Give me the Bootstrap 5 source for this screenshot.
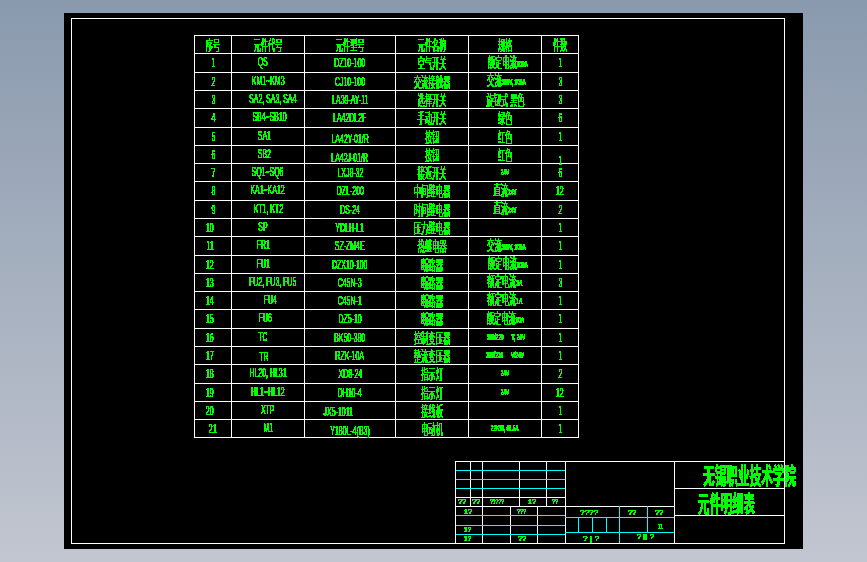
<!DOCTYPE html>
<html lang="zh">
<head>
<meta charset="utf-8">
<title>元件明细表</title>
<link href="https://cdn.jsdelivr.net/npm/bootstrap@5.3.0/dist/css/bootstrap.min.css" rel="stylesheet">
<style>
html,body{height:100%}
body{margin:0;overflow:hidden;background:linear-gradient(180deg,#8a9aae 0%,#c2c6d0 100%);}
.cad-sheet{background:#000;width:739px;height:536px;margin:13px 0 0 64px;padding:5px 7px 0}
.cad-frame{border:1px solid #fff;width:714px;height:526px}
.filter-defs{position:absolute;width:0;height:0}
.parts{width:385px;table-layout:fixed;border-collapse:collapse;margin:16px 0 0 122px;--bs-table-bg:transparent;--bs-table-color:#0f0;--bs-table-border-color:#fff;color:#0f0}
.parts>:not(caption)>*>*{padding:0;border:1px solid #fff;font-size:0;line-height:0;text-align:center;vertical-align:middle;overflow:visible;white-space:nowrap;background:transparent;color:#0f0;box-shadow:none}
.parts tr{height:18px}
.parts tr.tall{height:19px}
.c1{width:37px}.c2{width:73px}.c3{width:91px}.c4{width:73px}.c5{width:73px}.c6{width:37px}
.tx{display:inline-block;vertical-align:middle;font-family:"Noto Sans CJK SC","Liberation Sans",sans-serif;font-size:14px;font-weight:400;line-height:14px;transform:translate(var(--dx,0),var(--dy,-1px)) scaleX(var(--sx,.52));filter:url(#crisp)}
.la{font-family:"Liberation Sans",sans-serif;font-size:12px;font-weight:400;--sx:.58;--dy:0px}
.mi{font-family:"Liberation Sans",sans-serif;font-size:9px;font-weight:700}
.parts td:nth-child(2) .tx{--dy:-1px}
.u1{--dy:-1px!important}.u2{--dy:-2px!important}
.d1{--dy:1px!important}.d2{--dy:2px!important}.d3{--dy:3px!important}.d6{--dy:6px!important}
.l3{--dx:-3px}.l4{--dx:-4px}.l5{--dx:-5px}.l12{--dx:-12px}.r2{--dx:2px}
.title-block{display:block;align-self:flex-end;overflow:visible;margin-right:-14px}
.w{stroke:#fff;stroke-width:1}
.cy{stroke:#0ff;stroke-width:1}
.title-block text{fill:#0f0;font-family:"Liberation Sans",sans-serif;font-size:7px}
.title-block .big{font-family:"Noto Sans CJK SC",sans-serif;font-size:23px;font-weight:700}
.crisp-g{filter:url(#crisp)}
</style>
</head>
<body>
<svg class="filter-defs" aria-hidden="true"><filter id="crisp" x="-20%" y="-30%" width="140%" height="160%" color-interpolation-filters="sRGB"><feComponentTransfer><feFuncA type="discrete" tableValues="0 1 1 1 1 1 1 1"/></feComponentTransfer></filter></svg>
<div class="cad-sheet">
<div class="cad-frame d-flex flex-column">
<table class="table parts mb-0">
<colgroup><col class="c1"><col class="c2"><col class="c3"><col class="c4"><col class="c5"><col class="c6"></colgroup>
<tbody>
<tr><td><span class="tx">序号</span></td><td><span class="tx">元件代号</span></td><td><span class="tx">元件型号</span></td><td><span class="tx">元件名称</span></td><td><span class="tx">规格</span></td><td><span class="tx">件数</span></td></tr>
<tr class="tall"><td><span class="tx la">1</span></td><td><span class="tx la l5">QS</span></td><td><span class="tx la">DZ10-100</span></td><td><span class="tx">空气开关</span></td><td><span class="tx">额定电流<span class="mi">100A</span></span></td><td><span class="tx la">1</span></td></tr>
<tr><td><span class="tx la">2</span></td><td><span class="tx la">KM1~KM3</span></td><td><span class="tx la">CJ10-100</span></td><td><span class="tx">交流接触器</span></td><td><span class="tx">交流<span class="mi">380V, 100A</span></span></td><td><span class="tx la">3</span></td></tr>
<tr><td><span class="tx la">3</span></td><td><span class="tx la">SA2, SA3, SA4</span></td><td><span class="tx la">LA39-AY-11</span></td><td><span class="tx">选择开关</span></td><td><span class="tx">旋钮式 黑色</span></td><td><span class="tx la">3</span></td></tr>
<tr class="tall"><td><span class="tx la">4</span></td><td><span class="tx la r2">SB4~SB10</span></td><td><span class="tx la">LA42DL2F</span></td><td><span class="tx">手动开关</span></td><td><span class="tx">绿色</span></td><td><span class="tx la">6</span></td></tr>
<tr><td><span class="tx la">5</span></td><td><span class="tx la l4">SA1</span></td><td><span class="tx la d2">LA42Y-01/R</span></td><td><span class="tx">按钮</span></td><td><span class="tx">红色</span></td><td><span class="tx la">1</span></td></tr>
<tr><td><span class="tx la">6</span></td><td><span class="tx la l4">SB2</span></td><td><span class="tx la d3">LA42J-01/R</span></td><td><span class="tx">按钮</span></td><td><span class="tx">红色</span></td><td><span class="tx la d6">1</span></td></tr>
<tr><td><span class="tx la">7</span></td><td><span class="tx la">SQ1~SQ6</span></td><td><span class="tx la">LXJ8-32</span></td><td><span class="tx">接近开关</span></td><td><span class="tx mi">24V</span></td><td><span class="tx la">6</span></td></tr>
<tr class="tall"><td><span class="tx la">8</span></td><td><span class="tx la">KA1~KA12</span></td><td><span class="tx la">DZL-200</span></td><td><span class="tx">中间继电器</span></td><td><span class="tx">直流<span class="mi">24V</span></span></td><td><span class="tx la">12</span></td></tr>
<tr><td><span class="tx la">9</span></td><td><span class="tx la">KT1, KT2</span></td><td><span class="tx la">DS-24</span></td><td><span class="tx">时间继电器</span></td><td><span class="tx">直流<span class="mi">24V</span></span></td><td><span class="tx la">2</span></td></tr>
<tr><td><span class="tx la l3">10</span></td><td><span class="tx la l5">SP</span></td><td><span class="tx la">YDLH-L1</span></td><td><span class="tx">压力继电器</span></td><td></td><td><span class="tx la">1</span></td></tr>
<tr class="tall"><td><span class="tx la l3">11</span></td><td><span class="tx la l5">FR1</span></td><td><span class="tx la">SZ-ZM4E</span></td><td><span class="tx">热继电器</span></td><td><span class="tx">交流<span class="mi">380V, 100A</span></span></td><td><span class="tx la">1</span></td></tr>
<tr><td><span class="tx la l3">12</span></td><td><span class="tx la l5">FU1</span></td><td><span class="tx la">DZX10-100</span></td><td><span class="tx">断路器</span></td><td><span class="tx">额定电流<span class="mi">100A</span></span></td><td><span class="tx la">1</span></td></tr>
<tr><td><span class="tx la l3">13</span></td><td><span class="tx la">FU2, FU3, FU5</span></td><td><span class="tx la">C45N-3</span></td><td><span class="tx">断路器</span></td><td><span class="tx">额定电流<span class="mi">3A</span></span></td><td><span class="tx la">3</span></td></tr>
<tr><td><span class="tx la l3">14</span></td><td><span class="tx la r2">FU4</span></td><td><span class="tx la">C45N-1</span></td><td><span class="tx">断路器</span></td><td><span class="tx">额定电流<span class="mi">1A</span></span></td><td><span class="tx la">1</span></td></tr>
<tr class="tall"><td><span class="tx la l3">15</span></td><td><span class="tx la l3">FU6</span></td><td><span class="tx la">DZ5-10</span></td><td><span class="tx">断路器</span></td><td><span class="tx">额定电流<span class="mi">10A</span></span></td><td><span class="tx la">1</span></td></tr>
<tr><td><span class="tx la l3">16</span></td><td><span class="tx la l5">TC</span></td><td><span class="tx la">BK50-380</span></td><td><span class="tx">控制变压器</span></td><td><span class="tx mi">380/220&nbsp;&nbsp;&nbsp;&nbsp;&nbsp;&nbsp;V, 24V</span></td><td><span class="tx la">1</span></td></tr>
<tr><td><span class="tx la l3">17</span></td><td><span class="tx la l4 d1">TR</span></td><td><span class="tx la">RZK-10A</span></td><td><span class="tx">整流变压器</span></td><td><span class="tx mi">380/220&nbsp;&nbsp;&nbsp;&nbsp;&nbsp;&nbsp;V/24V</span></td><td><span class="tx la">1</span></td></tr>
<tr class="tall"><td><span class="tx la l3">18</span></td><td><span class="tx la">HL20, HL31</span></td><td><span class="tx la">XD8-24</span></td><td><span class="tx">指示灯</span></td><td><span class="tx mi">24V</span></td><td><span class="tx la">2</span></td></tr>
<tr><td><span class="tx la l3">19</span></td><td><span class="tx la">HL1~HL12</span></td><td><span class="tx la">DH10-4</span></td><td><span class="tx">指示灯</span></td><td><span class="tx mi">24V</span></td><td><span class="tx la">12</span></td></tr>
<tr><td><span class="tx la l3">20</span></td><td><span class="tx la">XTP</span></td><td><span class="tx la l12 d1">JX5-1011</span></td><td><span class="tx">接线板</span></td><td></td><td><span class="tx la">1</span></td></tr>
<tr><td><span class="tx la">21</span></td><td><span class="tx la">M1</span></td><td><span class="tx la d2">Y180L-4(B3)</span></td><td><span class="tx">电动机</span></td><td><span class="tx mi">22KW, 41.5A</span></td><td><span class="tx la">1</span></td></tr>
</tbody>
</table>
<svg class="title-block mt-auto" width="343" height="82" viewBox="455 461 343 82">
<g class="w">
<path d="M456 461.5H784M455.5 461V543M470.5 461V506M482.5 461V543M519.5 461V506M546.5 461V506M565.5 461V543M456 497.5H565M456 506.5H674M510.5 506V543M537.5 506V543M674.5 461V543M674 488.5H784M674 515.5H784"/>
</g>
<g class="cy">
<path d="M456 470.5H565M456 479.5H565M456 488.5H565M456 515.5H565M456 525.5H565M456 534.5H565M565 517.5H674M565 532.5H674M578.5 517V532M592.5 517V532M606.5 517V532M619.5 506V543M647.5 506V532"/>
</g>
<g class="crisp-g">
<text x="458" y="504" textLength="8" lengthAdjust="spacingAndGlyphs">??</text>
<text x="472" y="504" textLength="8" lengthAdjust="spacingAndGlyphs">??</text>
<text x="490" y="504" textLength="14" lengthAdjust="spacingAndGlyphs">?????</text>
<text x="528" y="504" textLength="8" lengthAdjust="spacingAndGlyphs">1?</text>
<text x="552" y="504" textLength="6" lengthAdjust="spacingAndGlyphs">??</text>
<text x="464" y="514" textLength="8" lengthAdjust="spacingAndGlyphs">1?</text>
<text x="517" y="514" textLength="9" lengthAdjust="spacingAndGlyphs">???</text>
<text x="464" y="532" textLength="7" lengthAdjust="spacingAndGlyphs">1?</text>
<text x="464" y="541" textLength="7" lengthAdjust="spacingAndGlyphs">1?</text>
<text x="518" y="541" textLength="8" lengthAdjust="spacingAndGlyphs">??</text>
<text x="580" y="515" textLength="18" lengthAdjust="spacingAndGlyphs">????</text>
<text x="628" y="515" textLength="8" lengthAdjust="spacingAndGlyphs">??</text>
<text x="655" y="515" textLength="8" lengthAdjust="spacingAndGlyphs">??</text>
<text x="658" y="529" textLength="5" lengthAdjust="spacingAndGlyphs">11</text>
<text x="583" y="541" textLength="16" lengthAdjust="spacingAndGlyphs">? | ?</text>
<text x="637" y="539" textLength="17" lengthAdjust="spacingAndGlyphs">? ▮ ?</text>
<text class="big" x="703" y="484" textLength="93" lengthAdjust="spacingAndGlyphs">无锡职业技术学院</text>
<text class="big" x="698" y="512" textLength="57" lengthAdjust="spacingAndGlyphs">元件明细表</text>
</g>
</svg>
</div>
</div>
<script src="https://cdn.jsdelivr.net/npm/bootstrap@5.3.0/dist/js/bootstrap.bundle.min.js"></script>
</body>
</html>
